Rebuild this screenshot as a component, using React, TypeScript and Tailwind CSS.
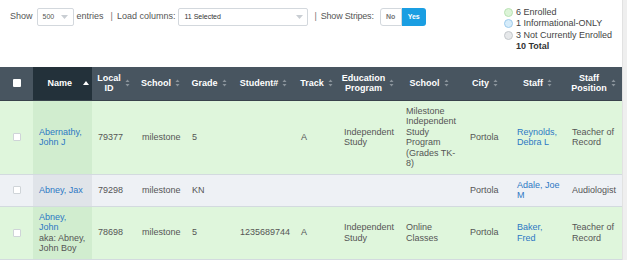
import React from 'react';

type Row = {
    bg: 'green' | 'gray';
    name: string[];
    aka?: string[];
    localId: string;
    school: string;
    grade: string;
    student: string;
    track: string;
    program: string[];
    school2: string[];
    city: string;
    staff: string[];
    position: string[];
};

const rows: Row[] = [
    {
        bg: 'green', name: ['Abernathy,', 'John J'], localId: '79377', school: 'milestone', grade: '5', student: '', track: 'A',
        program: ['Independent', 'Study'], school2: ['Milestone', 'Independent', 'Study', 'Program', '(Grades TK-', '8)'],
        city: 'Portola', staff: ['Reynolds,', 'Debra L'], position: ['Teacher of', 'Record'],
    },
    {
        bg: 'gray', name: ['Abney, Jax'], localId: '79298', school: 'milestone', grade: 'KN', student: '', track: '',
        program: [], school2: [], city: 'Portola', staff: ['Adale, Joe', 'M'], position: ['Audiologist'],
    },
    {
        bg: 'green', name: ['Abney,', 'John'], aka: ['aka: Abney,', 'John Boy'], localId: '78698', school: 'milestone', grade: '5',
        student: '1235689744', track: 'A', program: ['Independent', 'Study'], school2: ['Online', 'Classes'],
        city: 'Portola', staff: ['Baker,', 'Fred'], position: ['Teacher of', 'Record'],
    },
];

const SortIcon = () => (
    <svg width="5" height="8" viewBox="0 0 5 8" className="shrink-0">
        <path d="M2.5 0.5 L4.5 3 L0.5 3 Z" fill="#8b949c" />
        <path d="M2.5 7.5 L4.5 5 L0.5 5 Z" fill="#8b949c" />
    </svg>
);

const Caret = () => (
    <svg width="7" height="4" viewBox="0 0 7 4">
        <path d="M0 0 L7 0 L3.5 4 Z" fill="#c9ced3" />
    </svg>
);

const Lines = ({ lines }: { lines: string[] }) => (
    <>{lines.map((l, i) => <div key={i}>{l}</div>)}</>
);

const headers: { label: string[]; w: string }[] = [
    { label: ['Local', 'ID'], w: 'w-[43px]' },
    { label: ['School'], w: 'w-[51px]' },
    { label: ['Grade'], w: 'w-[46px]' },
    { label: ['Student#'], w: 'w-[63px]' },
    { label: ['Track'], w: 'w-[43px]' },
    { label: ['Education', 'Program'], w: 'w-[60px]' },
    { label: ['School'], w: 'w-[62px]' },
    { label: ['City'], w: 'w-[50px]' },
    { label: ['Staff'], w: 'w-[55px]' },
    { label: ['Staff', 'Position'], w: 'w-[57px]' },
];

export default function App() {
    return (
        <div className="flex w-[627px] h-[260px] overflow-hidden bg-white text-[9px] text-[#555] font-['Liberation_Sans',Arial,sans-serif]">
            <div className="w-[622px] shrink-0">
                {/* Toolbar */}
                <div className="flex h-[67px] items-start">
                    <div className="flex items-center h-[18px] mt-[8px] ml-[10px]">
                        <span>Show</span>
                        <div className="ml-[4px] w-[37px] h-[18px] border border-[#d3d8dd] rounded-[2px] flex items-center justify-between px-[5px] text-[7px] text-[#555]">
                            <span>500</span>
                            <Caret />
                        </div>
                        <span className="ml-[3px]">entries</span>
                        <span className="ml-[7px] text-[#777]">|</span>
                        <span className="ml-[4px]">Load columns:</span>
                        <div className="ml-[3px] w-[130px] h-[18px] border border-[#d3d8dd] rounded-[2px] flex items-center justify-between pl-[5px] pr-[4px] text-[7px] text-[#333]">
                            <span>11 Selected</span>
                            <Caret />
                        </div>
                        <span className="ml-[6px] text-[#777]">|</span>
                        <span className="ml-[4px] tracking-[-0.2px]">Show Stripes:</span>
                        <div className="ml-[6px] flex h-[18px] text-[7px] font-bold">
                            <div className="w-[22px] border border-[#d3d8dd] rounded-l-[3px] flex items-center justify-center text-[#777]">No</div>
                            <div className="w-[24px] bg-[#1a9ee2] rounded-r-[3px] flex items-center justify-center text-white">Yes</div>
                        </div>
                    </div>
                    <div className="ml-auto mr-[10px] mt-[7px] leading-[11.3px] text-[#444]">
                        {[
                            { label: '6 Enrolled', c: 'bg-[#dcf4d8] border-[#b9e2b3]' },
                            { label: '1 Informational-ONLY', c: 'bg-[#d6ecfa] border-[#9dcbec]' },
                            { label: '3 Not Currently Enrolled', c: 'bg-[#e6e8ea] border-[#c4c8cc]' },
                        ].map(({ label, c }) => (
                            <div key={label} className="flex items-center">
                                <span className={`w-[9px] h-[9px] rounded-full border ${c}`} />
                                <span className="ml-[3px]">{label}</span>
                            </div>
                        ))}
                        <div className="pl-[12px] font-bold text-[#333]">10 Total</div>
                    </div>
                </div>

                {/* Table */}
                <table className="table-fixed w-[622px] border-collapse leading-[10.5px]">
                    <thead>
                        <tr className="h-[33px] bg-[#485560] text-white font-bold border-b border-[#39434c]">
                            <th className="w-[33px] p-0">
                                <div className="mx-auto w-[8px] h-[8px] bg-white rounded-[1px]" />
                            </th>
                            <th className="w-[59px] p-0 bg-[#23313a]">
                                <div className="flex items-center justify-end gap-[11px] pr-[3px]">
                                    <span>Name</span>
                                    <svg width="6" height="4" viewBox="0 0 6 4"><path d="M3 0 L6 4 L0 4 Z" fill="#fff" /></svg>
                                </div>
                            </th>
                            {headers.map((h, i) => (
                                <th key={i} className={`${h.w} p-0`}>
                                    <div className="flex items-center justify-center gap-[4px] px-[2px]">
                                        <div className="text-center"><Lines lines={h.label} /></div>
                                        <SortIcon />
                                    </div>
                                </th>
                            ))}
                        </tr>
                    </thead>
                    <tbody>
                        {rows.map((r, i) => {
                            const green = r.bg === 'green';
                            return (
                                <tr key={i} className={`${green ? 'bg-[#dff6dc]' : 'bg-[#eef1f5]'} border-b border-[#d3dadf] align-middle`}>
                                    <td className="py-[5px]">
                                        <div className="mx-auto w-[8px] h-[8px] bg-white border border-[#cfd4d8] rounded-[1px]" />
                                    </td>
                                    <td className={`py-[5px] pl-[6px] ${green ? 'bg-[#d1edcf]' : 'bg-[#e0e4e9]'}`}>
                                        <div className="text-[#2d78c4]"><Lines lines={r.name} /></div>
                                        {r.aka && <Lines lines={r.aka} />}
                                    </td>
                                    <td className="py-[5px] pl-[6px]">{r.localId}</td>
                                    <td className="py-[5px] pl-[7px]">{r.school}</td>
                                    <td className="py-[5px] pl-[6px]">{r.grade}</td>
                                    <td className="py-[5px] pl-[8px]">{r.student}</td>
                                    <td className="py-[5px] pl-[6px]">{r.track}</td>
                                    <td className="py-[5px] pl-[6px]"><Lines lines={r.program} /></td>
                                    <td className="py-[5px] pl-[8px]"><Lines lines={r.school2} /></td>
                                    <td className="py-[5px] pl-[10px]">{r.city}</td>
                                    <td className="py-[5px] pl-[7px] text-[#2d78c4]"><Lines lines={r.staff} /></td>
                                    <td className="py-[5px] pl-[7px]"><Lines lines={r.position} /></td>
                                </tr>
                            );
                        })}
                    </tbody>
                </table>
            </div>
            <div className="w-[5px] bg-[#efefef] border-l border-[#e2e2e2]" />
        </div>
    );
}
